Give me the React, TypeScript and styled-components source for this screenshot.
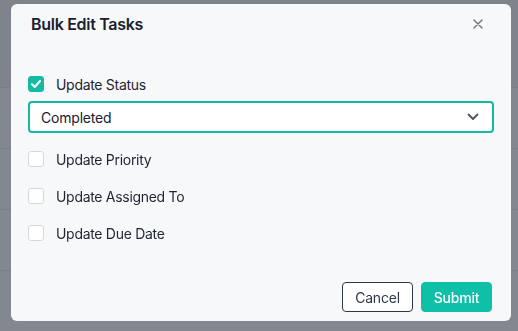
import styled, { createGlobalStyle } from "styled-components";

const GlobalStyle = createGlobalStyle`
  html, body {
    margin: 0;
    padding: 0;
  }
  body {
    font-family: Inter, "Noto Sans", "Liberation Sans", sans-serif;
    background: #80848d;
    width: 518px;
    height: 331px;
    overflow: hidden;
  }
`;

const fields = [
  { label: "Update Status", checked: true },
  { label: "Update Priority", checked: false },
  { label: "Update Assigned To", checked: false },
  { label: "Update Due Date", checked: false },
];

function App() {
  return (
    <>
      <GlobalStyle />
      <Backdrop>
        <BackdropHead />
        {[0, 1, 2, 3].map((i) => (
          <BackdropRow key={i} />
        ))}
      </Backdrop>

      <Modal role="dialog">
        <Header>
          <Title>Bulk Edit Tasks</Title>
          <CloseButton type="button" aria-label="Close">
            <svg width="10" height="10" viewBox="0 0 10 10">
              <path
                d="M1 1L9 9M9 1L1 9"
                stroke="#6b7280"
                strokeWidth="1.4"
                strokeLinecap="round"
              />
            </svg>
          </CloseButton>
        </Header>

        <Body>
          <CheckRow>
            <Box $checked>
              <svg width="10" height="8" viewBox="0 0 10 8">
                <path
                  d="M1 4.2L3.8 7L9 1"
                  fill="none"
                  stroke="#ffffff"
                  strokeWidth="2"
                  strokeLinecap="round"
                  strokeLinejoin="round"
                />
              </svg>
            </Box>
            <Label>{fields[0].label}</Label>
          </CheckRow>

          <Select>
            <span>Completed</span>
            <svg width="12" height="8" viewBox="0 0 12 8">
              <path
                d="M1.5 1.5L6 6L10.5 1.5"
                fill="none"
                stroke="#4b5563"
                strokeWidth="1.8"
                strokeLinecap="round"
                strokeLinejoin="round"
              />
            </svg>
          </Select>

          {fields.slice(1).map((field) => (
            <CheckRow key={field.label} $spaced>
              <Box $checked={field.checked} />
              <Label>{field.label}</Label>
            </CheckRow>
          ))}
        </Body>

        <Footer>
          <CancelButton type="button">Cancel</CancelButton>
          <SubmitButton type="button">Submit</SubmitButton>
        </Footer>
      </Modal>
    </>
  );
}

export default App;

const Backdrop = styled.div`
  width: 518px;
  height: 331px;
  display: flex;
  flex-direction: column;
`;

const BackdropHead = styled.div`
  height: 92px;
  background: #7f838c;
`;

const BackdropRow = styled.div`
  height: 63px;
  border-top: 1px solid #7a7e87;
  background: #83878f;
`;

const Modal = styled.div`
  position: fixed;
  left: 11px;
  top: 4px;
  width: 500px;
  height: 317px;
  box-sizing: border-box;
  background: #f7f8fa;
  border-radius: 6px;
  display: flex;
  flex-direction: column;
`;

const Header = styled.div`
  height: 40px;
  padding: 0 27px 0 20px;
  display: flex;
  align-items: center;
  justify-content: space-between;
`;

const Title = styled.h2`
  margin: 0;
  font-size: 16px;
  font-weight: 600;
  letter-spacing: -0.3px;
  color: #1a202c;
`;

const CloseButton = styled.button`
  width: 12px;
  height: 12px;
  padding: 0;
  border: none;
  background: transparent;
  display: flex;
  align-items: center;
  justify-content: center;
`;

const Body = styled.div`
  padding: 30px 17px 0;
  display: flex;
  flex-direction: column;
`;

const CheckRow = styled.div<{ $spaced?: boolean }>`
  height: 20px;
  display: flex;
  align-items: center;
  gap: 12px;
  margin-top: ${(p) => (p.$spaced ? "16px" : "0")};

  & + & {
    margin-top: 17px;
  }
`;

const Box = styled.span<{ $checked?: boolean }>`
  width: 16px;
  height: 16px;
  box-sizing: border-box;
  border-radius: 3px;
  display: flex;
  align-items: center;
  justify-content: center;
  background: ${(p) => (p.$checked ? "#14bba4" : "#ffffff")};
  border: 1px solid ${(p) => (p.$checked ? "#14bba4" : "#d4d7dd")};
`;

const Label = styled.span`
  font-size: 14px;
  letter-spacing: -0.3px;
  color: #1f2430;
`;

const Select = styled.div`
  margin-top: 7px;
  height: 32px;
  box-sizing: border-box;
  border: 2px solid #14bba4;
  border-radius: 4px;
  background: #ffffff;
  padding: 0 13px 0 11px;
  display: flex;
  align-items: center;
  justify-content: space-between;
  font-size: 14px;
  letter-spacing: -0.2px;
  color: #1a202c;
`;

const Footer = styled.div`
  margin-top: auto;
  padding: 0 19px 9px 0;
  display: flex;
  justify-content: flex-end;
  gap: 8px;
`;

const BaseButton = styled.button`
  width: 71px;
  height: 30px;
  box-sizing: border-box;
  border-radius: 4px;
  font-family: inherit;
  font-size: 14px;
  letter-spacing: -0.2px;
  padding: 0;
`;

const CancelButton = styled(BaseButton)`
  background: #ffffff;
  border: 1px solid #2d3748;
  color: #2d3748;
`;

const SubmitButton = styled(BaseButton)`
  background: #0fbfa7;
  border: 1px solid #0fbfa7;
  color: #ffffff;
  font-weight: 500;
`;
